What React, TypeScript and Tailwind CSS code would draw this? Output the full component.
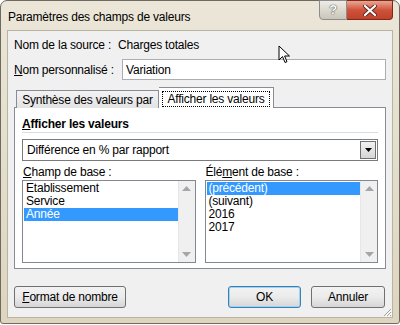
import React from "react";

const font = { fontFamily: '"Liberation Sans", Arial, sans-serif' };

function ScrollBar() {
  return (
    <div className="w-[17px] h-full bg-[#f0f0f0] border-l border-[#e6e6e6] flex flex-col justify-between items-center py-[5px]">
      <svg width="9" height="5" viewBox="0 0 9 5">
        <path d="M4.5 0 L9 5 L0 5 Z" fill="#a6a6a6" />
      </svg>
      <svg width="9" height="5" viewBox="0 0 9 5">
        <path d="M0 0 L9 0 L4.5 5 Z" fill="#a6a6a6" />
      </svg>
    </div>
  );
}

function ListBox({ items, selected }: { items: string[]; selected: number }) {
  return (
    <div className="w-full h-[83px] bg-white border border-[#828790] flex">
      <div className="flex-1 pt-[1px] pl-[1px]">
        {items.map((it, i) => (
          <div
            key={it}
            className={
              "h-[13px] leading-[13px] pl-[2px] text-[12px] " +
              (i === selected ? "bg-[#3399ff] text-white" : "text-black")
            }
          >
            {it}
          </div>
        ))}
      </div>
      <ScrollBar />
    </div>
  );
}

function Button({ children, focused, w }: { children: React.ReactNode; focused?: boolean; w: string }) {
  return (
    <div
      className={
        "h-[22px] rounded-[3px] border flex items-center justify-center text-[12px] text-black bg-gradient-to-b from-[#f2f2f2] via-[#ebebeb] to-[#d6d6d6] " +
        (focused ? "border-[#3c7fb1] shadow-[inset_0_0_0_1px_#9bd4f5]" : "border-[#707070]") +
        " " +
        w
      }
    >
      {children}
    </div>
  );
}

export default function App() {
  return (
    <div className="w-[400px] h-[325px] bg-white relative tracking-[-0.2px]" style={font}>
      <div className="w-[400px] h-[324px] rounded-t-[7px] rounded-b-[3px] border border-[#6e6a5f] bg-gradient-to-b from-[#ebe6d8] to-[#ddd5bf] flex flex-col">
        {/* Title bar */}
        <div className="h-[29px] flex items-start">
          <div className="pl-[7px] pt-[7px] text-[12px] text-black">Paramètres des champs de valeurs</div>
          <div className="ml-auto mr-[6px] flex h-[20px] -mt-[1px]">
            <div className="w-[28px] h-[20px] rounded-bl-[4px] border border-[#8c8c8c] bg-gradient-to-b from-[#eeece6] to-[#c9c5b8] flex items-center justify-center">
              <span className="text-[13px] font-bold text-white [text-shadow:0_0_1px_#333,0_0_1px_#333]">?</span>
            </div>
            <div className="w-[46px] h-[20px] rounded-br-[4px] border border-l-0 border-[#7a2a1a] bg-gradient-to-b from-[#e8a593] via-[#d0523a] to-[#c1412a] flex items-center justify-center">
              <svg width="14" height="11" viewBox="0 0 14 11">
                <path d="M2 1 L12 10 M12 1 L2 10" stroke="#5a2a20" strokeWidth="4" strokeLinecap="round" />
                <path d="M2 1 L12 10 M12 1 L2 10" stroke="#ffffff" strokeWidth="2.2" strokeLinecap="round" />
              </svg>
            </div>
          </div>
        </div>

        {/* Client area */}
        <div className="mx-[6px] h-[288px] bg-[#f0f0f0] border border-[#b9b3a2] relative text-black text-[12px]">
          <div className="pl-[6px] pt-[6px] flex h-[20px] items-center mt-[1px]">
            <span className="w-[104px]">Nom de la source :</span>
            <span>Charges totales</span>
          </div>

          <div className="pl-[6px] mt-[7px] flex items-center h-[21px]">
            <span className="w-[108px]">
              <u>N</u>om personnalisé :
            </span>
            <div className="w-[264px] h-[21px] bg-white border border-[#abadb3] flex items-center pl-[3px]">Variation</div>
          </div>

          {/* Tabs */}
          <div className="mt-[7px] ml-[6px] w-[372px]">
            <div className="flex items-end h-[21px] pl-[2px] relative z-10">
              <div className="w-[141px] h-[15px] border border-b-0 border-[#898c95] bg-gradient-to-b from-[#f3f3f3] to-[#e3e3e3] flex items-center justify-center pb-[1px] pt-[1px] box-content">
                Synthèse des valeurs par
              </div>
              <div className="w-[115px] h-[21px] border border-b-0 border-l-0 border-[#898c95] bg-white flex items-start justify-center pt-[3px]">
                <span className="border border-dotted border-black px-[4px] leading-[14px]">Afficher les valeurs</span>
              </div>
            </div>
            <div className="h-[162px] -mt-[1px] border border-[#898c95] bg-white px-[7px]">
              <div className="pt-[9px] font-bold h-[25px] border-b border-[#d5dfe5] leading-[14px]">
                <u>A</u>fficher les valeurs
              </div>
              <div className="mt-[6px] h-[22px] border border-[#7a7a7a] flex items-center">
                <span className="pl-[4px] flex-1">Différence en % par rapport</span>
                <div className="w-[16px] h-[18px] mr-[1px] border border-[#707070] bg-gradient-to-b from-[#f2f2f2] to-[#d5d5d5] flex items-center justify-center">
                  <svg width="7" height="4" viewBox="0 0 7 4">
                    <path d="M0 0 L7 0 L3.5 4 Z" fill="#000" />
                  </svg>
                </div>
              </div>
              <div className="flex gap-[9px] mt-[3px]">
                <div className="flex-1 min-w-0">
                  <div className="h-[16px] leading-[16px] pl-[1px]">
                    <u>C</u>hamp de base :
                  </div>
                  <ListBox items={["Etablissement", "Service", "Année"]} selected={2} />
                </div>
                <div className="flex-1 min-w-0">
                  <div className="h-[16px] leading-[16px] pl-[1px]">
                    Élé<u>m</u>ent de base :
                  </div>
                  <ListBox items={["(précédent)", "(suivant)", "2016", "2017"]} selected={0} />
                </div>
              </div>
            </div>
          </div>

          {/* Buttons */}
          <div className="flex items-center mt-[17px] pl-[6px] pr-[7px]">
            <Button w="w-[112px]">
              <span>
                <u>F</u>ormat de nombre
              </span>
            </Button>
            <div className="ml-auto flex gap-[10px]">
              <Button w="w-[73px]" focused>
                OK
              </Button>
              <Button w="w-[74px]">Annuler</Button>
            </div>
          </div>

          {/* resize grip */}
          <svg className="absolute right-0 bottom-0" width="10" height="10" viewBox="0 0 10 10">
            <path d="M9 2 L2 9 M9 5 L5 9 M9 8 L8 9" stroke="#a0a0a0" strokeWidth="1" />
            <path d="M10 3 L3 10 M10 6 L6 10" stroke="#ffffff" strokeWidth="1" />
          </svg>

          {/* mouse cursor */}
          <svg className="absolute left-[270px] top-[14px]" width="14" height="20" viewBox="0 0 14 20">
            <path d="M1 1 L1 15 L4.5 11.5 L7 17.5 L9 16.7 L6.6 11 L11.5 11 Z" fill="#fff" stroke="#000" strokeWidth="1" strokeLinejoin="round" />
          </svg>
        </div>
      </div>
    </div>
  );
}
